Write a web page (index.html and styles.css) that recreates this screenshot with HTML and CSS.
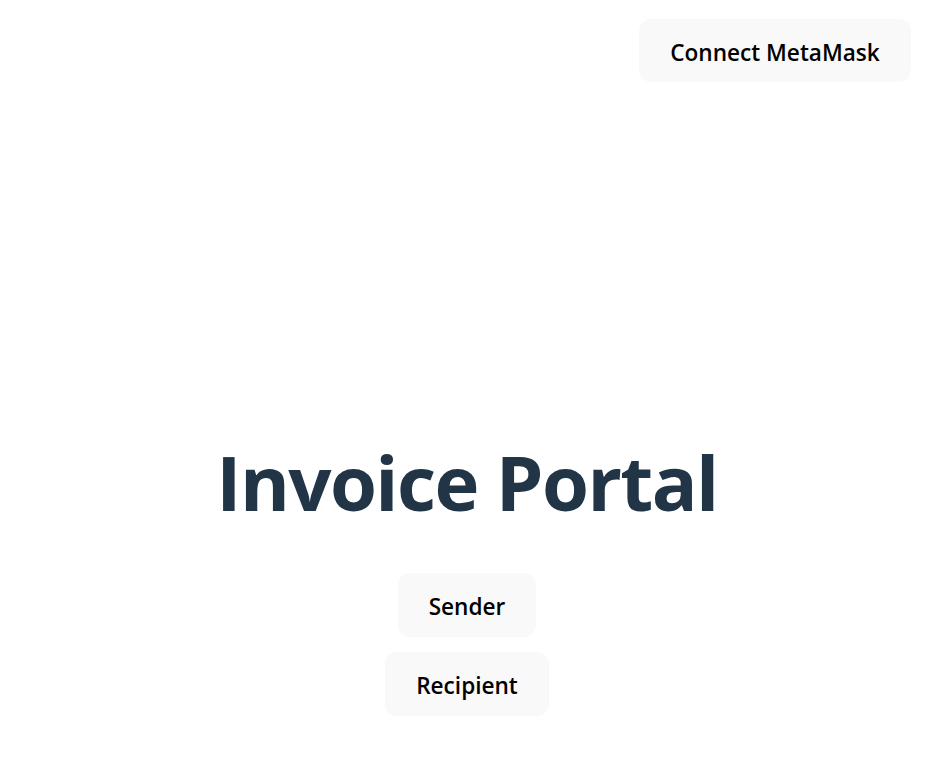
FILE: index.html
```html
<!DOCTYPE html>
<html lang="en">
<head>
<meta charset="utf-8">
<title>Invoice Portal</title>
<link rel="stylesheet" href="styles.css">
</head>
<body>
<header class="topbar">
  <button class="btn btn-connect">Connect MetaMask</button>
</header>
<main class="hero">
  <h1 class="title">Invoice Portal</h1>
  <div class="roles">
    <button class="btn">Sender</button>
    <button class="btn">Recipient</button>
  </div>
</main>
</body>
</html>
```
FILE: styles.css
```css
html, body {
  margin: 0;
  padding: 0;
  background: #ffffff;
}
body {
  font-family: "Open Sans", "Noto Sans", sans-serif;
  color: #213547;
  width: 934px;
  height: 783px;
  overflow: hidden;
}
.topbar {
  display: flex;
  justify-content: flex-end;
  padding: 19px 23px 0 0;
}
.btn {
  font-family: "Open Sans", "Noto Sans", sans-serif;
  font-weight: 600;
  font-size: 22.6px;
  color: #000;
  background: #f9f9f9;
  border: 1px solid transparent;
  border-radius: 12px;
  height: 64px;
  padding: 3px 30px 0;
  cursor: pointer;
}
.btn-connect {
  width: 272px;
  height: 63px;
  padding-left: 0;
  padding-right: 0;
}
.hero {
  display: flex;
  flex-direction: column;
  align-items: center;
  padding-top: 358px;
}
.title {
  margin: 0;
  font-size: 76px;
  font-weight: 700;
  line-height: 1.1;
  letter-spacing: -1.6px;
  color: #213547;
}
.roles {
  display: flex;
  flex-direction: column;
  align-items: center;
  gap: 15px;
  margin-top: 49px;
}
```
